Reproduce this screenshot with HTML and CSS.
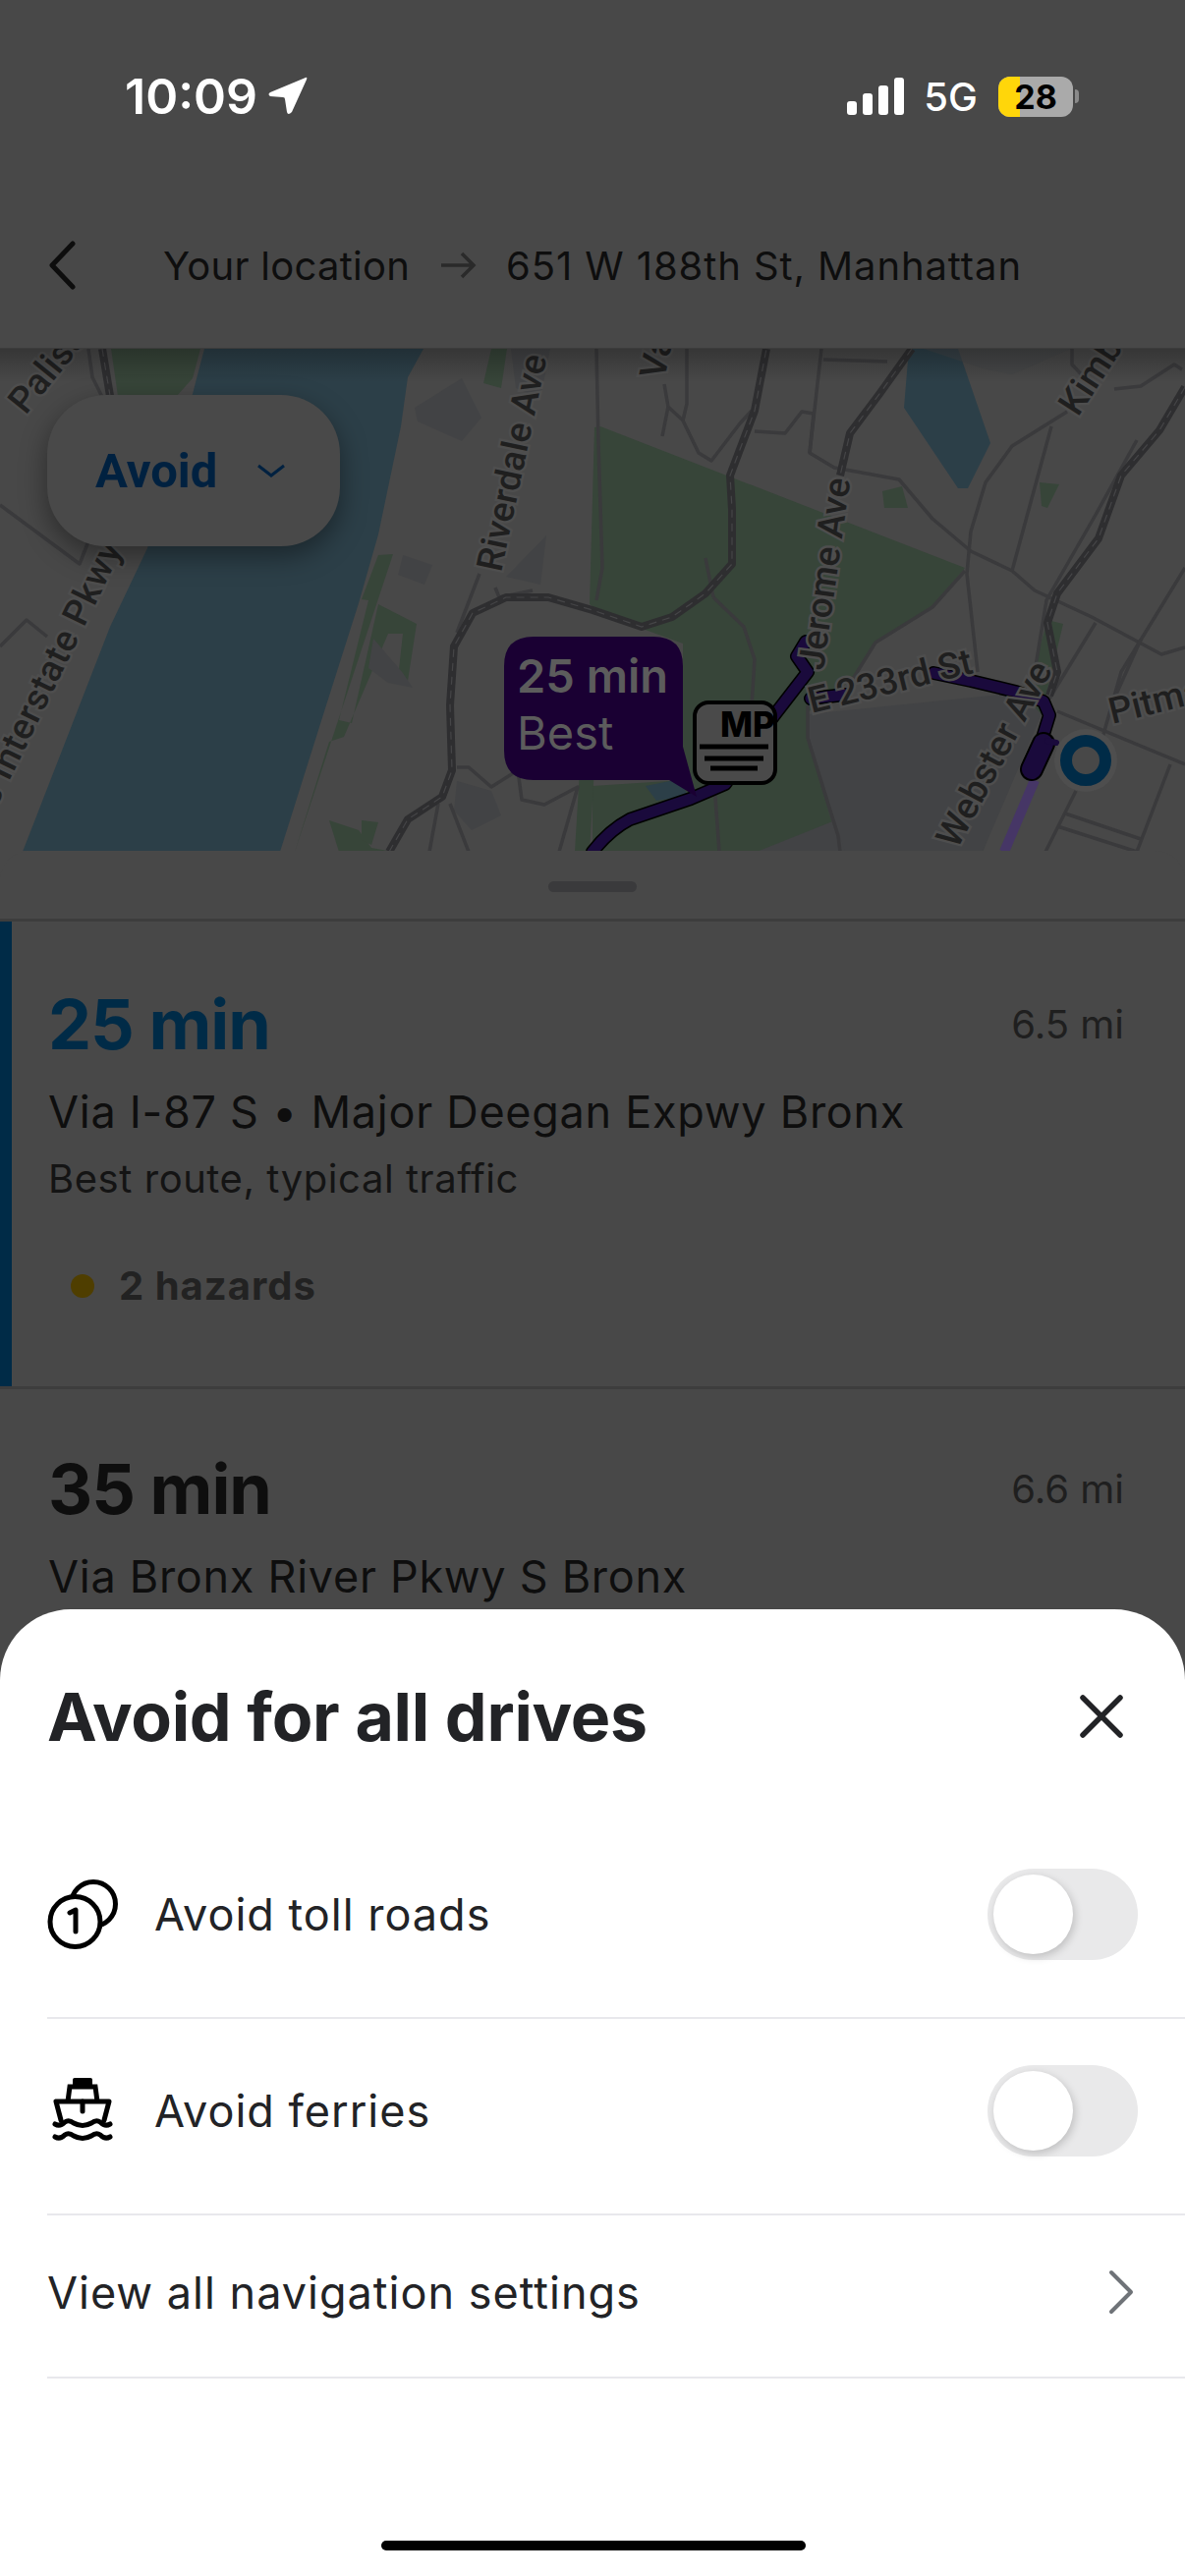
FILE: index.html
```html
<!DOCTYPE html>
<html>
<head>
    <title>Avoid for all drives</title>
    <link rel="stylesheet" href="styles.css">
</head>
<body>

<div class="phone">

    <!-- Status bar and route header -->
    <div class="top">
        <div class="status">
            <div class="status-left">
                <span class="clock">10:09</span>
                <svg class="loc-arrow" width="40" height="40" viewBox="0 0 40 40"><path d="M38 1 Q40 0 39 3 L24 36 Q20 40 19 36 L17 23 Q17 21 15 21 L2 20 Q-1 18 2 16 Z" fill="#fff"/></svg>
            </div>
            <div class="status-right">
                <svg class="signal" width="58" height="38" viewBox="0 0 58 38">
                    <rect x="0" y="24" width="10" height="14" rx="3" fill="#fff"/>
                    <rect x="16" y="16" width="10" height="22" rx="3" fill="#fff"/>
                    <rect x="32" y="8" width="10" height="30" rx="3" fill="#fff"/>
                    <rect x="48" y="0" width="10" height="38" rx="3" fill="#fff"/>
                </svg>
                <span class="net">5G</span>
                <div class="battery"><div class="battery-fill"></div><span class="battery-num">28</span></div>
                <div class="battery-nub"></div>
            </div>
        </div>
        <div class="route-head">
            <svg class="back" width="32" height="50" viewBox="0 0 32 50"><path d="M27 3 L6 25 L27 47" fill="none" stroke="#0d0d0d" stroke-width="5" stroke-linecap="round" stroke-linejoin="round"/></svg>
            <span class="place">Your location</span>
            <svg class="to-arrow" width="38" height="28" viewBox="0 0 38 28"><path d="M2 14 H35 M23 2 L35 14 L23 26" fill="none" stroke="#2a2a2a" stroke-width="3.5"/></svg>
            <span class="place place-to">651 W 188th St, Manhattan</span>
        </div>
    </div>

    <!-- Map -->
    <div class="map">
        <svg class="map-art" width="1206" height="512" viewBox="0 0 1206 512">
            <rect width="1206" height="512" fill="#484848"/>

            <!-- parks -->
            <g fill="#374539">
                <path d="M113 0 L204 0 L196 30 L180 48 L120 48 Z"/>
                <path d="M400 209 L385 210 L368 255 L375 256 L345 378 L358 381 L385 260 L424 280 L415 338 L405 336 L410 290 L395 290 L350 395 L335 400 L300 512 L345 512 L335 480 L365 490 L378 508 L400 512 L300 512 Z"/>
                <path d="M611 79 L982 223 L949 263 L891 299 L868 336 L822 370 L822 396 L853 496 L855 512 L603 512 L603 445 L695 439 L695 300 L613 270 L600 260 L605 80 Z"/>
                <path d="M500 0 L516 0 L510 40 L492 35 Z"/>
                <path d="M595 345 L610 340 L600 512 L585 512 Z"/>
                <path d="M1066 276 L1082 280 L1060 372 L1040 400 L1000 512 L975 512 L1048 340 Z"/>
                <path d="M1058 136 L1078 138 L1066 162 L1060 160 Z"/>
                <path d="M898 145 L918 140 L924 162 L900 162 Z"/>
                <path d="M368 480 L385 482 L378 505 L368 500 Z"/>
            </g>

            <!-- water -->
            <g fill="#2c3f48">
                <path d="M208 0 L431 0 L415 29 L408 79 L385 189 L365 259 L331 366 L285 512 L23 512 L112 283 L150 203 L196 46 Z"/>
                <path d="M925 0 L975 0 L1008 96 L985 142 L975 142 L920 60 Z"/>
                <path d="M657 445 L692 438 L700 455 L668 460 Z"/>
            </g>

            <!-- built up areas -->
            <g fill="#424345">
                <path d="M822 372 L1038 350 L1060 372 L1000 512 L855 512 L822 396 Z"/>
                <path d="M422 60 L470 30 L490 70 L470 94 L425 74 Z"/>
                <path d="M520 0 L560 0 L550 50 L525 40 Z"/>
                <path d="M410 210 L440 220 L432 240 L405 230 Z"/>
                <path d="M522 225 L556 190 L550 240 L515 232 Z"/>
                <path d="M380 295 L410 330 L420 345 L395 340 L375 325 Z"/>
                <path d="M465 440 L500 450 L510 475 L480 490 L462 470 Z"/>
                <path d="M940 0 L1090 0 L1030 26 L1000 20 Z" opacity=".5"/>
                <path d="M770 512 L850 480 L860 512 Z"/>
            </g>

            <!-- thin roads -->
            <g fill="none" stroke="#3a3a3c" stroke-width="3.5" stroke-linejoin="round">
                <path d="M607 0 L609 96 L613 223 L607 256"/>
                <path d="M676 36 L680 59 L695 73 L711 106 L724 114 L753 76 L765 63"/>
                <path d="M699 0 L699 56 L695 73"/>
                <path d="M674 89 L680 59"/>
                <path d="M768 84 L799 86 L816 64 L828 66 L824 106 L849 121 L915 133 L949 173 L988 206 L1030 226 L1053 246 L1111 273 L1182 311 L1206 304"/>
                <path d="M836 0 L824 106"/>
                <path d="M838 11 L903 13"/>
                <path d="M1091 0 L1091 16 L1107 33"/>
                <path d="M1134 41 L1161 38 L1195 16 L1203 21"/>
                <path d="M1086 64 L1030 99 L1003 136 L988 186 L984 229 L995 329"/>
                <path d="M1070 79 L1030 226"/>
                <path d="M982 226 L949 263 L891 299 L868 336"/>
                <path d="M1206 223 L1141 329 L1122 396"/>
                <path d="M1157 93 L1115 169 L1065 256 L1053 329"/>
                <path d="M1115 279 L1068 356"/>
                <path d="M1076 369 L1206 423"/>
                <path d="M1161 296 L1134 356"/>
                <path d="M1191 423 L1157 512"/>
                <path d="M1095 450 L1064 512"/>
                <path d="M1084 473 L1161 499"/>
                <path d="M1076 486 L1157 512"/>
                <path d="M822 363 L822 396 L853 496 L855 512"/>
                <path d="M726 253 L757 283 L768 316 L765 363"/>
                <path d="M726 429 L732 512"/>
                <path d="M718 213 L726 253"/>
                <path d="M90 0 L94 29 L104 49"/>
                <path d="M0 159 L81 219 L90 196"/>
                <path d="M0 303 L27 276 L48 293"/>
                <path d="M488 229 L465 289"/>
                <path d="M504 243 L508 253 L542 246"/>
                <path d="M458 463 L477 512"/>
                <path d="M446 463 L437 512"/>
                <path d="M465 426 L477 426 L500 446 L527 429 L531 459 L554 464 L588 446 L569 512"/>
            </g>

            <!-- highways -->
            <g class="highway-base">
                <path d="M104 0 L112 48"/>
                <path d="M396 512 L415 479 L450 456 L460 429 L458 363 L462 303 L481 269 L515 253 L558 253 L603 266 L653 283 L684 273 L718 249 L745 219 L745 163 L743 129 L768 63 L780 0"/>
                <path d="M928 0 L895 46 L865 86 L855 129"/>
                <path d="M1206 39 L1180 83 L1141 129 L1118 193 L1076 249 L1066 279 L1076 329 L1068 353"/>
            </g>
            <g class="highway-dash">
                <path d="M104 0 L112 48"/>
                <path d="M396 512 L415 479 L450 456 L460 429 L458 363 L462 303 L481 269 L515 253 L558 253 L603 266 L653 283 L684 273 L718 249 L745 219 L745 163 L743 129 L768 63 L780 0"/>
                <path d="M928 0 L895 46 L865 86 L855 129"/>
                <path d="M1206 39 L1180 83 L1141 129 L1118 193 L1076 249 L1066 279 L1076 329 L1068 353"/>
            </g>

            <!-- route -->
            <g fill="none" stroke-linecap="round" stroke-linejoin="round">
                <path d="M1053 439 L1022 512" stroke="#463666" stroke-width="10" stroke-linecap="butt"/>
                <path d="M603 512 Q620 490 641 479 L703 458 L738 443 L788 373 L822 329 L811 313 L820 298" stroke="#000" stroke-width="14"/>
                <path d="M603 512 Q620 490 641 479 L703 458 L738 443 L788 373 L822 329 L811 313 L820 298" stroke="#1a0a3c" stroke-width="11"/>
                <path d="M825 356 L860 352 M950 330 L988 338 L1034 349 L1062 359 L1068 373 L1052 425" stroke="#000" stroke-width="14"/>
                <path d="M825 356 L860 352 M950 330 L988 338 L1034 349 L1062 359 L1068 373 L1052 425" stroke="#1a0a3c" stroke-width="11"/>
                <path d="M1062 402 L1050 428" stroke="#000" stroke-width="24"/>
                <path d="M1062 402 L1050 428" stroke="#1a0a3c" stroke-width="20"/>
                <path d="M1066 399 L1075 401" stroke="#1a0a3c" stroke-width="6"/>
            </g>

            <!-- street labels -->
            <g class="map-labels">
                <text transform="translate(26 68) rotate(-51)">Palisades</text>
                <text class="label-wide" transform="translate(125 203) rotate(-64)" text-anchor="end">Palisades Interstate Pkwy</text>
                <text transform="translate(510 228) rotate(-78)">Riverdale Ave</text>
                <text transform="translate(676 32) rotate(-78)">Van Cortlandt</text>
                <text transform="translate(838 328) rotate(-82)">Jerome Ave</text>
                <text transform="translate(826 371) rotate(-14)">E 233rd St</text>
                <text transform="translate(974 510) rotate(-62)">Webster Ave</text>
                <text transform="translate(1097 70) rotate(-57)">Kimball Ave</text>
                <text transform="translate(1132 382) rotate(-14)">Pitman Ave</text>
            </g>

            <!-- origin marker -->
            <circle cx="1105" cy="419" r="32" fill="#4e4e4e"/>
            <circle cx="1105" cy="419" r="20" fill="#484848" stroke="#002b47" stroke-width="12"/>

            <!-- time bubble -->
            <path d="M543 293 H665 Q695 293 695 323 V405 L709 456 L681 439 H543 Q513 439 513 409 V323 Q513 293 543 293 Z" fill="#1a0033"/>
            <text class="bubble-time" x="526" y="350">25 min</text>
            <text class="bubble-sub" x="526" y="408">Best</text>

            <!-- MP badge -->
            <rect x="707" y="360" width="82" height="82" rx="14" fill="#4a4a4a" stroke="#000" stroke-width="4"/>
            <text class="mp-text" x="733" y="395">MP</text>
            <path d="M712 405 H782 M717 417 H777 M723 427 H771" stroke="#000" stroke-width="5"/>
        </svg>
        <div class="map-shade"></div>
        <div class="avoid-pill">
            <span class="avoid-text">Avoid</span>
            <svg width="30" height="14" viewBox="0 0 30 14"><path d="M2 2 L15 12 L28 2" fill="none" stroke="#002140" stroke-width="3"/></svg>
        </div>
    </div>

    <!-- Route list -->
    <div class="routes">
        <div class="handle-bar"><div class="handle"></div></div>
        <div class="route route-active">
            <div class="route-top">
                <span class="route-time route-time-active">25 min</span>
                <span class="route-dist">6.5 mi</span>
            </div>
            <div class="route-via">Via I-87 S • Major Deegan Expwy Bronx</div>
            <div class="route-note">Best route, typical traffic</div>
            <div class="hazards"><span class="hazard-dot"></span><span class="hazard-text">2 hazards</span></div>
        </div>
        <div class="route">
            <div class="route-top">
                <span class="route-time">35 min</span>
                <span class="route-dist">6.6 mi</span>
            </div>
            <div class="route-via">Via Bronx River Pkwy S Bronx</div>
        </div>
    </div>

    <!-- Bottom sheet -->
    <div class="sheet">
        <div class="sheet-head">
            <h1 class="sheet-title">Avoid for all drives</h1>
            <svg class="close" width="44" height="44" viewBox="0 0 44 44"><path d="M3 3 L41 41 M41 3 L3 41" fill="none" stroke="#222326" stroke-width="5.5" stroke-linecap="round"/></svg>
        </div>
        <div class="option">
            <svg class="option-icon" width="72" height="72" viewBox="0 0 72 72">
                <circle cx="47" cy="26" r="22.5" fill="none" stroke="#000" stroke-width="5"/>
                <circle cx="28.5" cy="44" r="25.5" fill="#fff" stroke="#000" stroke-width="5"/>
                <path d="M23 35 L29 32 V54" fill="none" stroke="#000" stroke-width="5" stroke-linecap="round" stroke-linejoin="round"/>
            </svg>
            <span class="option-label">Avoid toll roads</span>
            <div class="toggle"><div class="knob"></div></div>
        </div>
        <div class="option">
            <svg class="option-icon" width="72" height="72" viewBox="0 0 72 72">
                <rect x="26" y="3" width="20" height="9" rx="2" fill="#000"/>
                <path d="M21 27 L23 12 H49 L51 27" fill="none" stroke="#000" stroke-width="5"/>
                <path d="M9 27 H63 L58 46 M14 46 L9 27" fill="none" stroke="#000" stroke-width="5" stroke-linejoin="round" stroke-linecap="round"/>
                <path d="M36 27 V37" fill="none" stroke="#000" stroke-width="5" stroke-linecap="round"/>
                <path d="M8 50 Q13 53 18 48 Q22 45 27 49 Q36 54 45 49 Q50 45 54 48 Q59 53 64 50" fill="none" stroke="#000" stroke-width="5" stroke-linecap="round"/>
                <path d="M8 63 Q13 66 18 61 Q22 58 27 62 Q36 67 45 62 Q50 58 54 61 Q59 66 64 63" fill="none" stroke="#000" stroke-width="5" stroke-linecap="round"/>
            </svg>
            <span class="option-label">Avoid ferries</span>
            <div class="toggle"><div class="knob"></div></div>
        </div>
        <div class="option option-link">
            <span class="option-label">View all navigation settings</span>
            <svg class="more" width="26" height="46" viewBox="0 0 26 46"><path d="M3 3 L23 23 L3 43" fill="none" stroke="#6f7378" stroke-width="4" stroke-linecap="round" stroke-linejoin="round"/></svg>
        </div>
        <div class="home-bar"></div>
    </div>

</div>

</body>
</html>
```

FILE: styles.css
```css
* {
    box-sizing: border-box;
}

body {
    margin: 0;
    background: #484848;
    font-family: "Inter", "Liberation Sans", sans-serif;
}

.phone {
    position: relative;
    width: 1206px;
    height: 2622px;
    overflow: hidden;
    background: #484848;
}

/* Status bar and route header */
.top {
    height: 354px;
    display: flex;
    flex-direction: column;
}

.status {
    height: 198px;
    padding: 76px 108px 0 127px;
    display: flex;
    justify-content: space-between;
    align-items: flex-start;
    color: #fff;
}

.status-left {
    display: flex;
    align-items: center;
    gap: 11px;
}

.clock {
    font-size: 50px;
    line-height: 44px;
    font-weight: 600;
}

.status-right {
    display: flex;
    align-items: center;
    height: 44px;
}

.net {
    margin-left: 20px;
    font-size: 40px;
    font-weight: 500;
}

.battery {
    position: relative;
    margin-left: 21px;
    width: 76px;
    height: 41px;
    border-radius: 12px;
    background: #aaaaaa;
    overflow: hidden;
    display: flex;
    align-items: center;
    justify-content: center;
}

.battery-fill {
    position: absolute;
    left: 0;
    top: 0;
    bottom: 0;
    width: 22px;
    background: #ffd60a;
}

.battery-num {
    position: relative;
    font-size: 34px;
    font-weight: 700;
    color: #000;
}

.battery-nub {
    width: 4px;
    height: 14px;
    margin-left: 2px;
    border-radius: 0 4px 4px 0;
    background: #8a8a8a;
}

.route-head {
    display: flex;
    align-items: center;
    height: 144px;
    padding-left: 47px;
}

.back {
    margin-right: 87px;
}

.place {
    font-size: 40px;
    letter-spacing: 0.25px;
    color: #0e0e0e;
}

.place-to {
    letter-spacing: 0.9px;
}

.to-arrow {
    margin: 0 30px;
}

/* Map */
.map {
    position: relative;
    height: 512px;
    overflow: hidden;
    border-top: 1px solid #3c3c3c;
}

.map-art {
    display: block;
}

.map-labels text {
    font-family: "Roboto", sans-serif;
    font-size: 37px;
    font-weight: 500;
    fill: #1f1f1f;
    stroke: #4e4e4e;
    stroke-width: 5px;
    paint-order: stroke;
}

.map-labels .label-wide {
    letter-spacing: 0.5px;
}

.highway-base path {
    fill: none;
    stroke: #2e2e30;
    stroke-width: 8px;
    stroke-linejoin: round;
}

.highway-dash path {
    fill: none;
    stroke: #454547;
    stroke-width: 1.2px;
    stroke-dasharray: 8 6;
}

.bubble-time {
    font-size: 47px;
    font-weight: 600;
    fill: #5c5c5c;
}

.bubble-sub {
    font-size: 47px;
    fill: #5c5c5c;
}

.mp-text {
    font-size: 35px;
    font-weight: 800;
    fill: #000;
}

.map-shade {
    position: absolute;
    left: 0;
    right: 0;
    top: 0;
    height: 34px;
    background: linear-gradient(rgba(0, 0, 0, 0.25), rgba(0, 0, 0, 0));
}

.avoid-pill {
    position: absolute;
    left: 48px;
    top: 47px;
    width: 298px;
    height: 154px;
    padding-left: 49px;
    border-radius: 60px;
    background: #494949;
    box-shadow: 0 10px 28px rgba(0, 0, 0, 0.4);
    display: flex;
    align-items: center;
    gap: 40px;
}

.avoid-text {
    font-family: "Roboto", sans-serif;
    font-size: 49px;
    font-weight: 700;
    color: #002140;
}

/* Route list */
.routes {
    position: relative;
    border-radius: 30px 30px 0 0;
    background: #484848;
}

.handle-bar {
    height: 72px;
    padding-top: 31px;
    border-bottom: 3px solid #3d3d3d;
    display: flex;
    justify-content: center;
}

.handle {
    width: 90px;
    height: 11px;
    border-radius: 6px;
    background: #3a3a3c;
}

.route {
    padding: 68px 62px 0 49px;
}

.route-active {
    height: 473px;
    border-left: 12px solid #002b47;
    padding-left: 37px;
    box-shadow: 0 3px 0 #3d3d3d;
}

.route-top {
    display: flex;
    justify-content: space-between;
    align-items: center;
    height: 72px;
}

.route-time {
    font-size: 70px;
    font-weight: 700;
    letter-spacing: -1px;
    color: #0e0e0e;
}

.route-time-active {
    color: #002b47;
}

.route-dist {
    font-size: 40px;
    color: #1f1f1f;
}

.route-via {
    margin-top: 27px;
    font-size: 45px;
    line-height: 54px;
    letter-spacing: 0.72px;
    color: #0e0e0e;
}

.route-note {
    margin-top: 17px;
    font-size: 40px;
    line-height: 48px;
    letter-spacing: 0.55px;
    color: #141414;
}

.hazards {
    margin-top: 60px;
    padding-left: 23px;
    display: flex;
    align-items: center;
    gap: 25px;
}

.hazard-dot {
    width: 24px;
    height: 24px;
    border-radius: 50%;
    background: #4f3e00;
}

.hazard-text {
    font-size: 40px;
    font-weight: 700;
    letter-spacing: 1px;
    color: #222222;
}

/* Bottom sheet */
.sheet {
    position: absolute;
    left: 0;
    right: 0;
    top: 1638px;
    bottom: 0;
    padding-left: 48px;
    border-radius: 72px 72px 0 0;
    background: #fff;
    color: #222326;
}

.sheet-head {
    display: flex;
    justify-content: space-between;
    align-items: center;
    height: 217px;
    padding: 0 63px 0 0;
}

.sheet-title {
    margin: 0;
    font-size: 68px;
    font-weight: 700;
    letter-spacing: -0.25px;
}

.option {
    display: flex;
    align-items: center;
    height: 200px;
    padding: 0 48px 12px 0;
    border-bottom: 2px solid #e8e8ec;
}

.option-link {
    height: 166px;
    padding: 0 52px 8px 0;
    justify-content: space-between;
}

.option-icon {
    margin-right: 37px;
    flex: none;
}

.option-label {
    font-size: 45px;
    letter-spacing: 1px;
}

.toggle {
    position: relative;
    margin-left: auto;
    width: 153px;
    height: 93px;
    border-radius: 47px;
    background: #e9e9ea;
}

.knob {
    position: absolute;
    left: 6px;
    top: 6px;
    width: 81px;
    height: 81px;
    border-radius: 50%;
    background: #fff;
    box-shadow: 2px 3px 9px rgba(0, 0, 0, 0.18);
}

.home-bar {
    position: absolute;
    left: 388px;
    bottom: 26px;
    width: 432px;
    height: 10px;
    border-radius: 5px;
    background: #000;
}
```
